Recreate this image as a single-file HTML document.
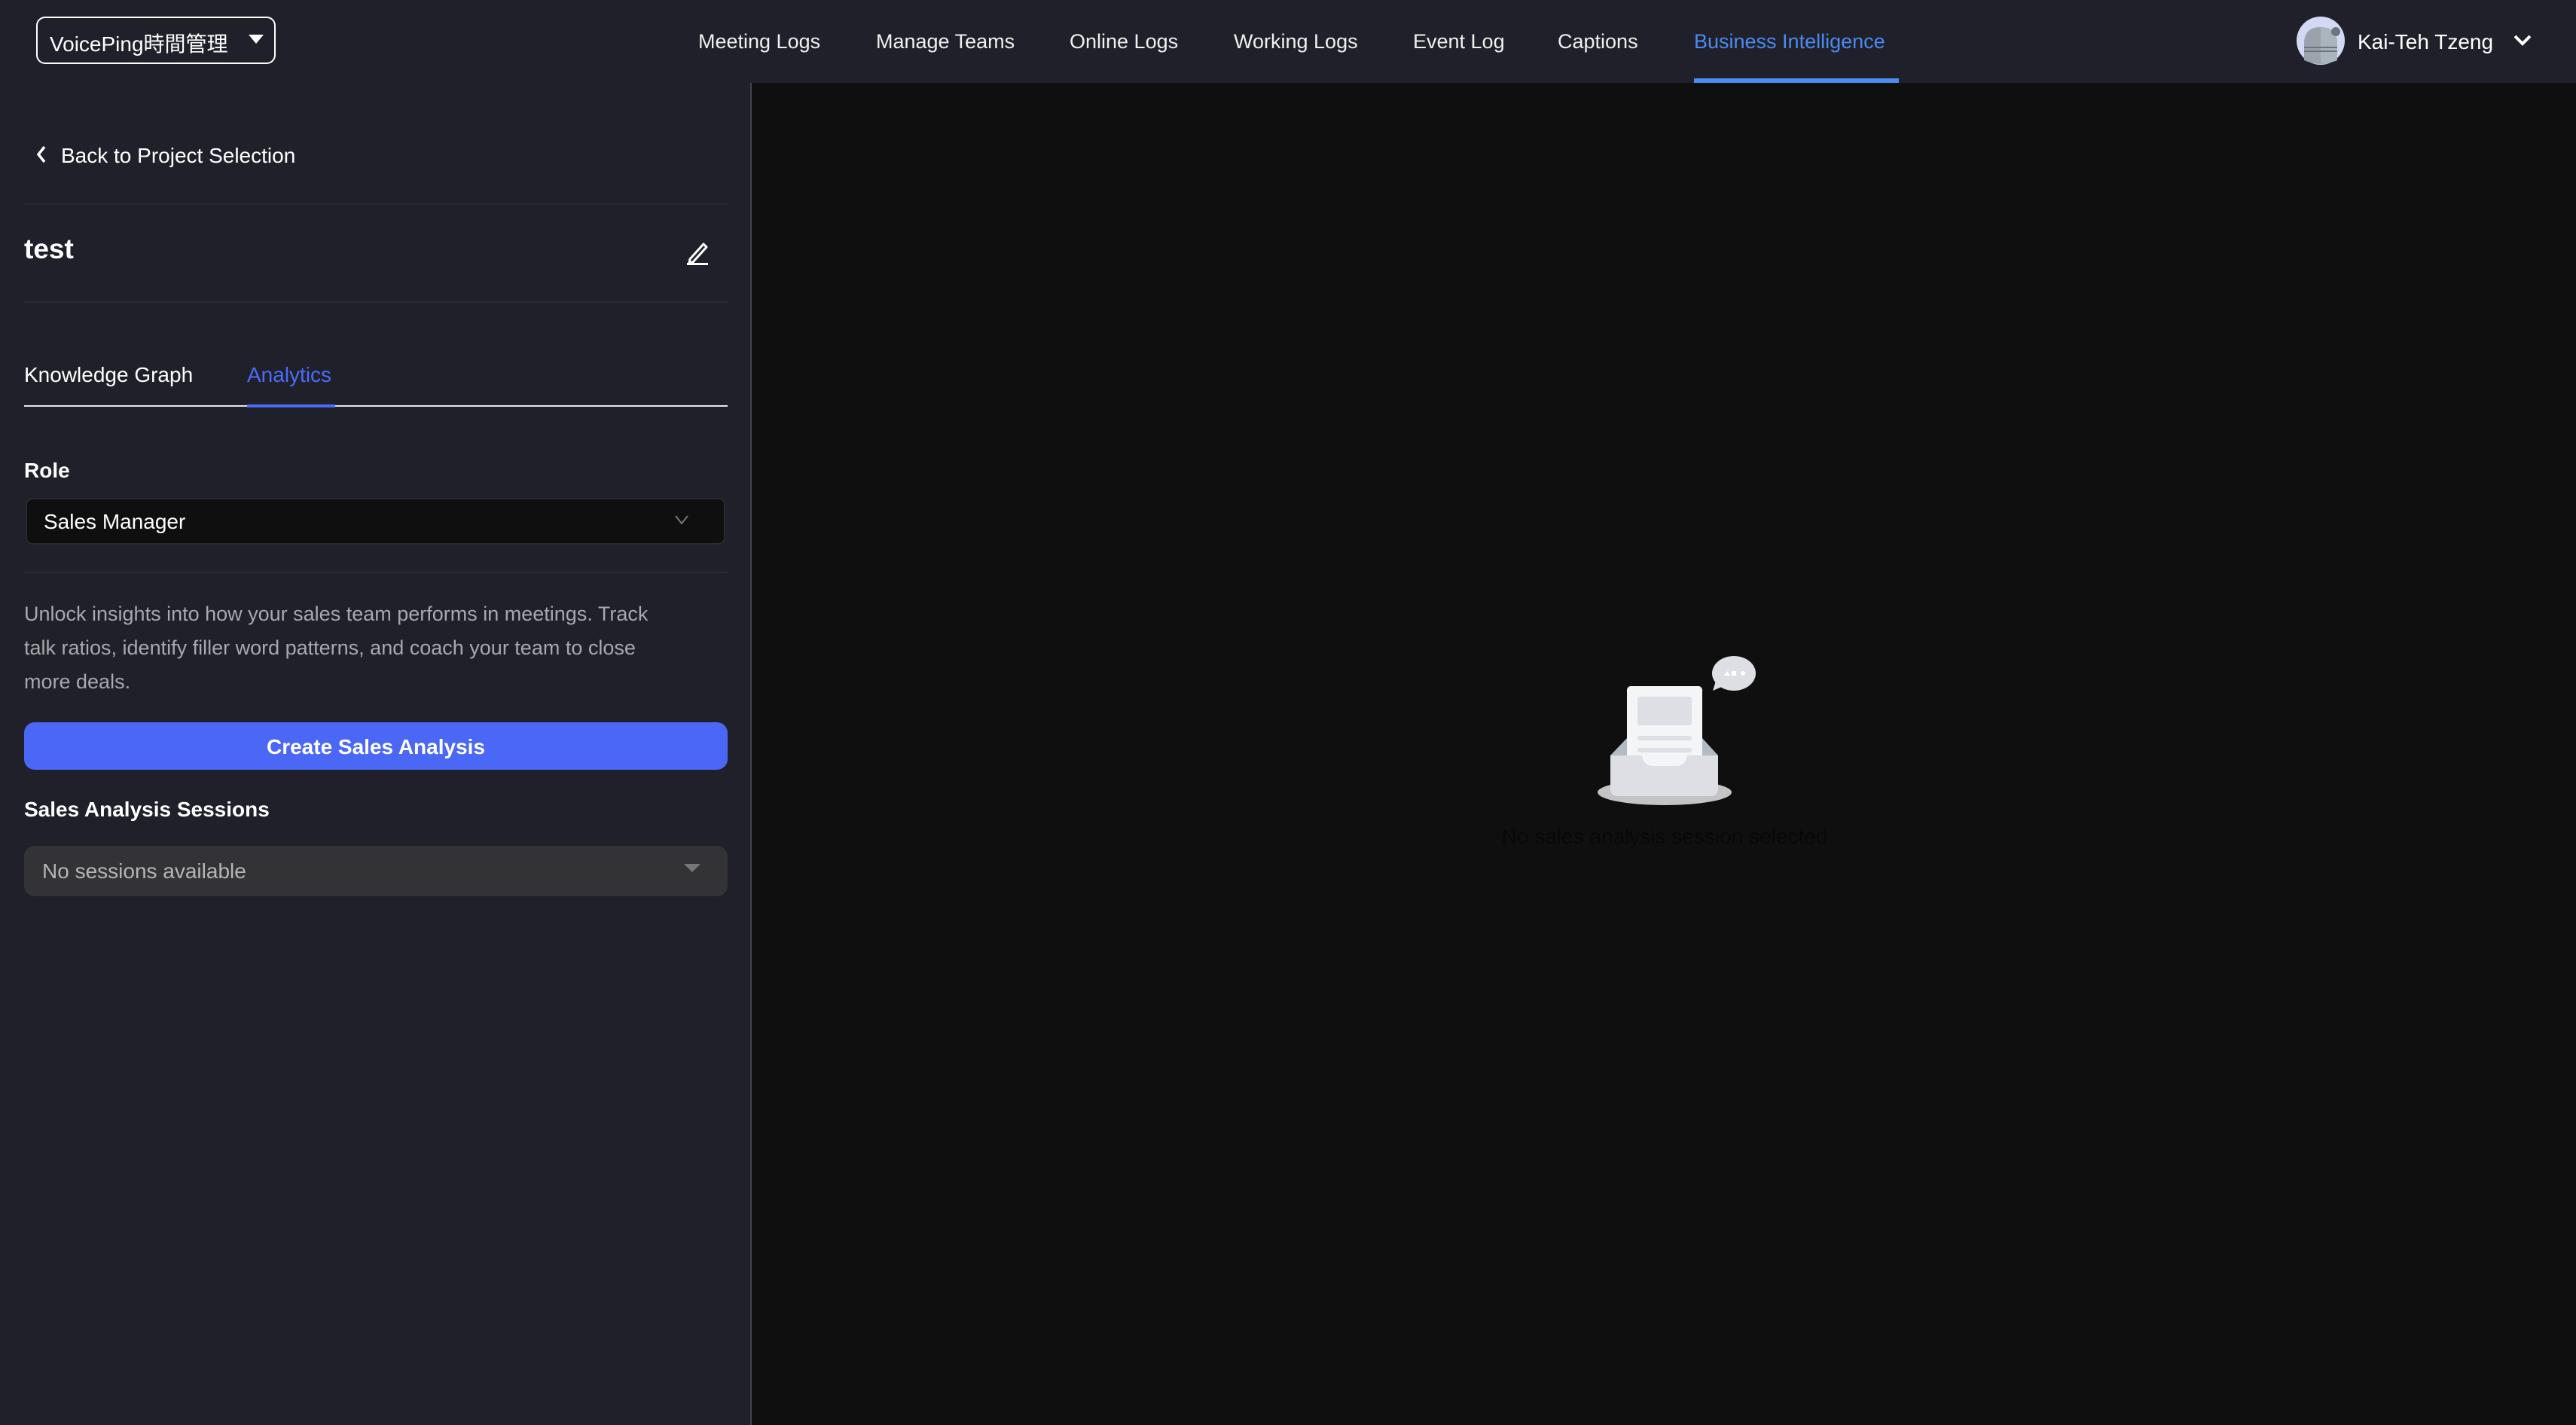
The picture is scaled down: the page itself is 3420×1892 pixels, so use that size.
<!DOCTYPE html>
<html><head><meta charset="utf-8"><style>
*{box-sizing:border-box;margin:0;padding:0}
html,body{width:3420px;height:1892px;overflow:hidden;background:#0f0f0f;font-family:"Liberation Sans","Noto Sans CJK JP",sans-serif;color:#fff}
.hdr{position:absolute;left:0;top:0;width:3420px;height:110px;background:#1f2029}
.abs{position:absolute;white-space:nowrap}
.nav{top:40px;font-size:27px;color:#f0f0f0}
.side{position:absolute;left:0;top:110px;width:998px;height:1782px;background:#1f2029;border-right:2px solid #45454f}
.div{position:absolute;left:32px;width:934px;height:2px;background:#2a2b30}
</style></head><body>
<div class="hdr">
 <div class="abs" style="left:48px;top:22px;width:318px;height:63px;border:2px solid #fff;border-radius:12px"></div>
 <div class="abs" style="left:66px;top:37px;font-size:28px">VoicePing時間管理</div>
 <svg class="abs" style="left:330px;top:46px" width="20" height="14"><path d="M0 0H20L10 12Z" fill="#fff"/></svg>
 <div class="abs nav" style="left:927px">Meeting Logs</div>
 <div class="abs nav" style="left:1163px">Manage Teams</div>
 <div class="abs nav" style="left:1420px">Online Logs</div>
 <div class="abs nav" style="left:1638px">Working Logs</div>
 <div class="abs nav" style="left:1876px">Event Log</div>
 <div class="abs nav" style="left:2068px">Captions</div>
 <div class="abs nav" style="left:2249px;color:#4a8cf0">Business Intelligence</div>
 <div class="abs" style="left:2249px;top:104px;width:272px;height:6px;background:#4a8cf0"></div>
 <svg class="abs" style="left:3049px;top:22px" width="64" height="64">
  <circle cx="32" cy="32" r="32" fill="#d3d9f5"/>
  <path d="M10 58V36Q10 14 32 14Q54 14 54 36V58Q32 68 10 58Z" fill="#9aa3ab"/>
  <path d="M32 14Q54 14 54 36V58Q44 62 32 62Z" fill="#aab4bc"/>
  <rect x="10" y="40" width="44" height="2" fill="#6c757d"/><rect x="10" y="45" width="44" height="2" fill="#6c757d"/>
  <circle cx="52" cy="20" r="6" fill="#6c757d"/>
 </svg>
 <div class="abs" style="left:3130px;top:40px;font-size:28px">Kai-Teh Tzeng</div>
 <svg class="abs" style="left:3336px;top:44px" width="26" height="18"><path d="M3 4L13 14L23 4" stroke="#fff" stroke-width="4" fill="none"/></svg>
</div>
<div class="side">
 <svg class="abs" style="left:48px;top:82px" width="14" height="26"><path d="M11 3L3 13L11 23" stroke="#fff" stroke-width="3.5" fill="none"/></svg>
 <div class="abs" style="left:81px;top:81px;font-size:28px">Back to Project Selection</div>
 <div class="div" style="top:160px"></div>
 <div class="abs" style="left:32px;top:200px;font-size:37px;font-weight:bold">test</div>
 <svg class="abs" style="left:910px;top:210px" width="34" height="34"><path d="M6 24L24 4L28 8L10 28L5 29Z" stroke="#fff" stroke-width="3" fill="none" stroke-linejoin="round"/><rect x="2" y="29" width="28" height="3" fill="#fff"/></svg>
 <div class="div" style="top:290px"></div>
 <div class="abs" style="left:32px;top:372px;font-size:28px">Knowledge Graph</div>
 <div class="abs" style="left:328px;top:372px;font-size:28px;color:#4a6cf7">Analytics</div>
 <div class="abs" style="left:32px;top:428px;width:934px;height:2px;background:#e8e8e8"></div>
 <div class="abs" style="left:328px;top:427px;width:117px;height:4px;background:#4a6cf7"></div>
 <div class="abs" style="left:32px;top:499px;font-size:28px;font-weight:bold">Role</div>
 <div class="abs" style="left:34px;top:551px;width:929px;height:62px;background:#0f0f0f;border:2px solid #2a2b30;border-radius:9px"></div>
 <div class="abs" style="left:58px;top:567px;font-size:28px">Sales Manager</div>
 <svg class="abs" style="left:895px;top:573px" width="20" height="14"><path d="M2 2L10 12L18 2" stroke="#777" stroke-width="2" fill="none"/></svg>
 <div class="div" style="top:649px"></div>
 <div class="abs" style="left:32px;top:683px;font-size:27px;line-height:45px;color:#a8a8ad">Unlock insights into how your sales team performs in meetings. Track<br>talk ratios, identify filler word patterns, and coach your team to close<br>more deals.</div>
 <div class="abs" style="left:32px;top:849px;width:934px;height:63px;background:#4a68f5;border-radius:14px;text-align:center;line-height:65px;font-size:28px;font-weight:bold">Create Sales Analysis</div>
 <div class="abs" style="left:32px;top:949px;font-size:28px;font-weight:bold">Sales Analysis Sessions</div>
 <div class="abs" style="left:32px;top:1013px;width:934px;height:67px;background:#333335;border-radius:14px"></div>
 <div class="abs" style="left:56px;top:1031px;font-size:28px;color:#b5b5b8">No sessions available</div>
 <svg class="abs" style="left:908px;top:1037px" width="22" height="12"><path d="M0 0H22L11 11Z" fill="#777"/></svg>
</div>
<svg class="abs" style="left:0;top:0" width="3420" height="1892">
 <ellipse cx="2210" cy="1052" rx="89" ry="17" fill="#c4c4c4"/>
 <path d="M2138 1003L2160 980H2260L2281 1003Z" fill="#b2bac3"/>
 <rect x="2160" y="911" width="100" height="120" rx="5" fill="#f4f5f7"/>
 <rect x="2174" y="925" width="72" height="38" rx="3" fill="#dddfe5"/>
 <rect x="2174" y="977" width="72" height="6" rx="3" fill="#dddfe5"/>
 <rect x="2174" y="993" width="72" height="6" rx="3" fill="#dddfe5"/>
 <path d="M2138 1003H2180Q2182 1017 2194 1017H2226Q2238 1017 2240 1003H2281V1047Q2281 1057 2271 1057H2148Q2138 1057 2138 1047Z" fill="#dddfe5"/>
 <ellipse cx="2302" cy="894" rx="29" ry="23" fill="#dddfe5"/>
 <path d="M2278 904L2274 917L2290 910Z" fill="#dddfe5"/>
 <path d="M2289 897L2293 891L2297 897Z" fill="#fff"/><rect x="2299" y="891" width="6" height="6" fill="#fff"/><circle cx="2314" cy="894" r="3" fill="#fff"/>
 <text x="2210" y="1120" text-anchor="middle" font-size="28" fill="#080808" font-family="Liberation Sans, sans-serif">No sales analysis session selected</text>
</svg>
</body></html>
